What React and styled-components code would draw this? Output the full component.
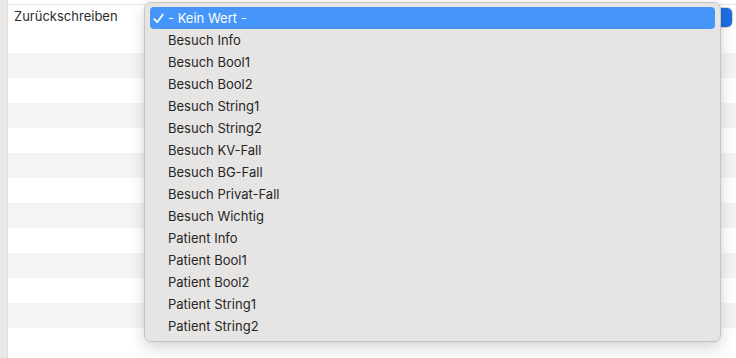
import React from "react";
import styled, { createGlobalStyle } from "styled-components";

const GlobalStyle = createGlobalStyle`
  html, body {
    margin: 0;
    padding: 0;
    background: #ffffff;
  }
  body {
    font-family: "Inter", "Liberation Sans", sans-serif;
    -webkit-font-smoothing: antialiased;
  }
`;

const Page = styled.div`
  position: relative;
  display: flex;
  width: 736px;
  height: 358px;
  overflow: hidden;
  background: #ffffff;
`;

const SideStrip = styled.div`
  width: 7px;
  flex: none;
  background: #e9e8e6;
  border-right: 1px solid #dcdcdb;
`;

const Table = styled.div`
  flex: 1;
  display: flex;
  flex-direction: column;
  padding-top: 4px;
`;

const Row = styled.div`
  display: flex;
  align-items: flex-start;
  height: ${(p) => (p.$tall ? 48 : 25)}px;
  flex: none;
  background: ${(p) => (p.$striped ? "#f3f4f4" : "#ffffff")};
  border-top: ${(p) => (p.$first ? "1px solid #e4e4e4" : "none")};
`;

const Label = styled.div`
  width: 138px;
  padding: 3px 0 0 6px;
  font-size: 13px;
  color: #2b2b2b;
`;

const SelectBox = styled.div`
  display: flex;
  justify-content: flex-end;
  width: 580px;
  height: 19px;
  margin-top: 3px;
  border-radius: 5px;
  background: #ffffff;
  box-shadow: 0 0 0 1px #d4d4d4;
`;

const SelectArrow = styled.div`
  width: 18px;
  height: 19px;
  border-radius: 5px;
  background: #1c6fe3;
`;

const SideField = styled.div`
  width: 10px;
  height: 18px;
  margin: 3px 0 0 6px;
  border: 1px solid #c9c9c9;
  border-right: none;
  background: #f8f8f8;
`;

const Menu = styled.div`
  position: absolute;
  left: 144px;
  top: 2px;
  width: 565px;
  padding: 4px 5px;
  display: flex;
  flex-direction: column;
  background: #e6e5e3;
  border: 1px solid #c6c5c4;
  border-radius: 7px;
  box-shadow: 0 6px 16px rgba(0, 0, 0, 0.16), 0 0 3px rgba(0, 0, 0, 0.06);
`;

const Item = styled.div`
  display: flex;
  align-items: center;
  height: 22px;
  padding-left: ${(p) => (p.$selected ? "3px" : "18px")};
  border-radius: 4px;
  font-size: 13px;
  color: ${(p) => (p.$selected ? "#ffffff" : "#262626")};
  background: ${(p) => (p.$selected ? "#4596f8" : "transparent")};
`;

const Check = styled.svg`
  width: 11px;
  height: 11px;
  margin-right: 4px;
  flex: none;
`;

const options = [
  "Besuch Info",
  "Besuch Bool1",
  "Besuch Bool2",
  "Besuch String1",
  "Besuch String2",
  "Besuch KV-Fall",
  "Besuch BG-Fall",
  "Besuch Privat-Fall",
  "Besuch Wichtig",
  "Patient Info",
  "Patient Bool1",
  "Patient Bool2",
  "Patient String1",
  "Patient String2",
];

export default function App() {
  const rows = Array.from({ length: 12 }, (_, i) => i);
  return (
    <>
      <GlobalStyle />
      <Page>
        <SideStrip />
        <Table>
          <Row $tall $first>
            <Label>Zurückschreiben</Label>
            <SelectBox>
              <SelectArrow />
            </SelectBox>
            <SideField />
          </Row>
          {rows.map((i) => (
            <Row key={i} $striped={i % 2 === 0} />
          ))}
        </Table>
        <Menu>
          <Item $selected>
            <Check viewBox="0 0 11 11">
              <path
                d="M1.2 6 L4.2 9.2 L9.8 1.4"
                fill="none"
                stroke="#ffffff"
                strokeWidth="1.7"
                strokeLinecap="round"
                strokeLinejoin="round"
              />
            </Check>
            - Kein Wert -
          </Item>
          {options.map((o) => (
            <Item key={o}>{o}</Item>
          ))}
        </Menu>
      </Page>
    </>
  );
}
